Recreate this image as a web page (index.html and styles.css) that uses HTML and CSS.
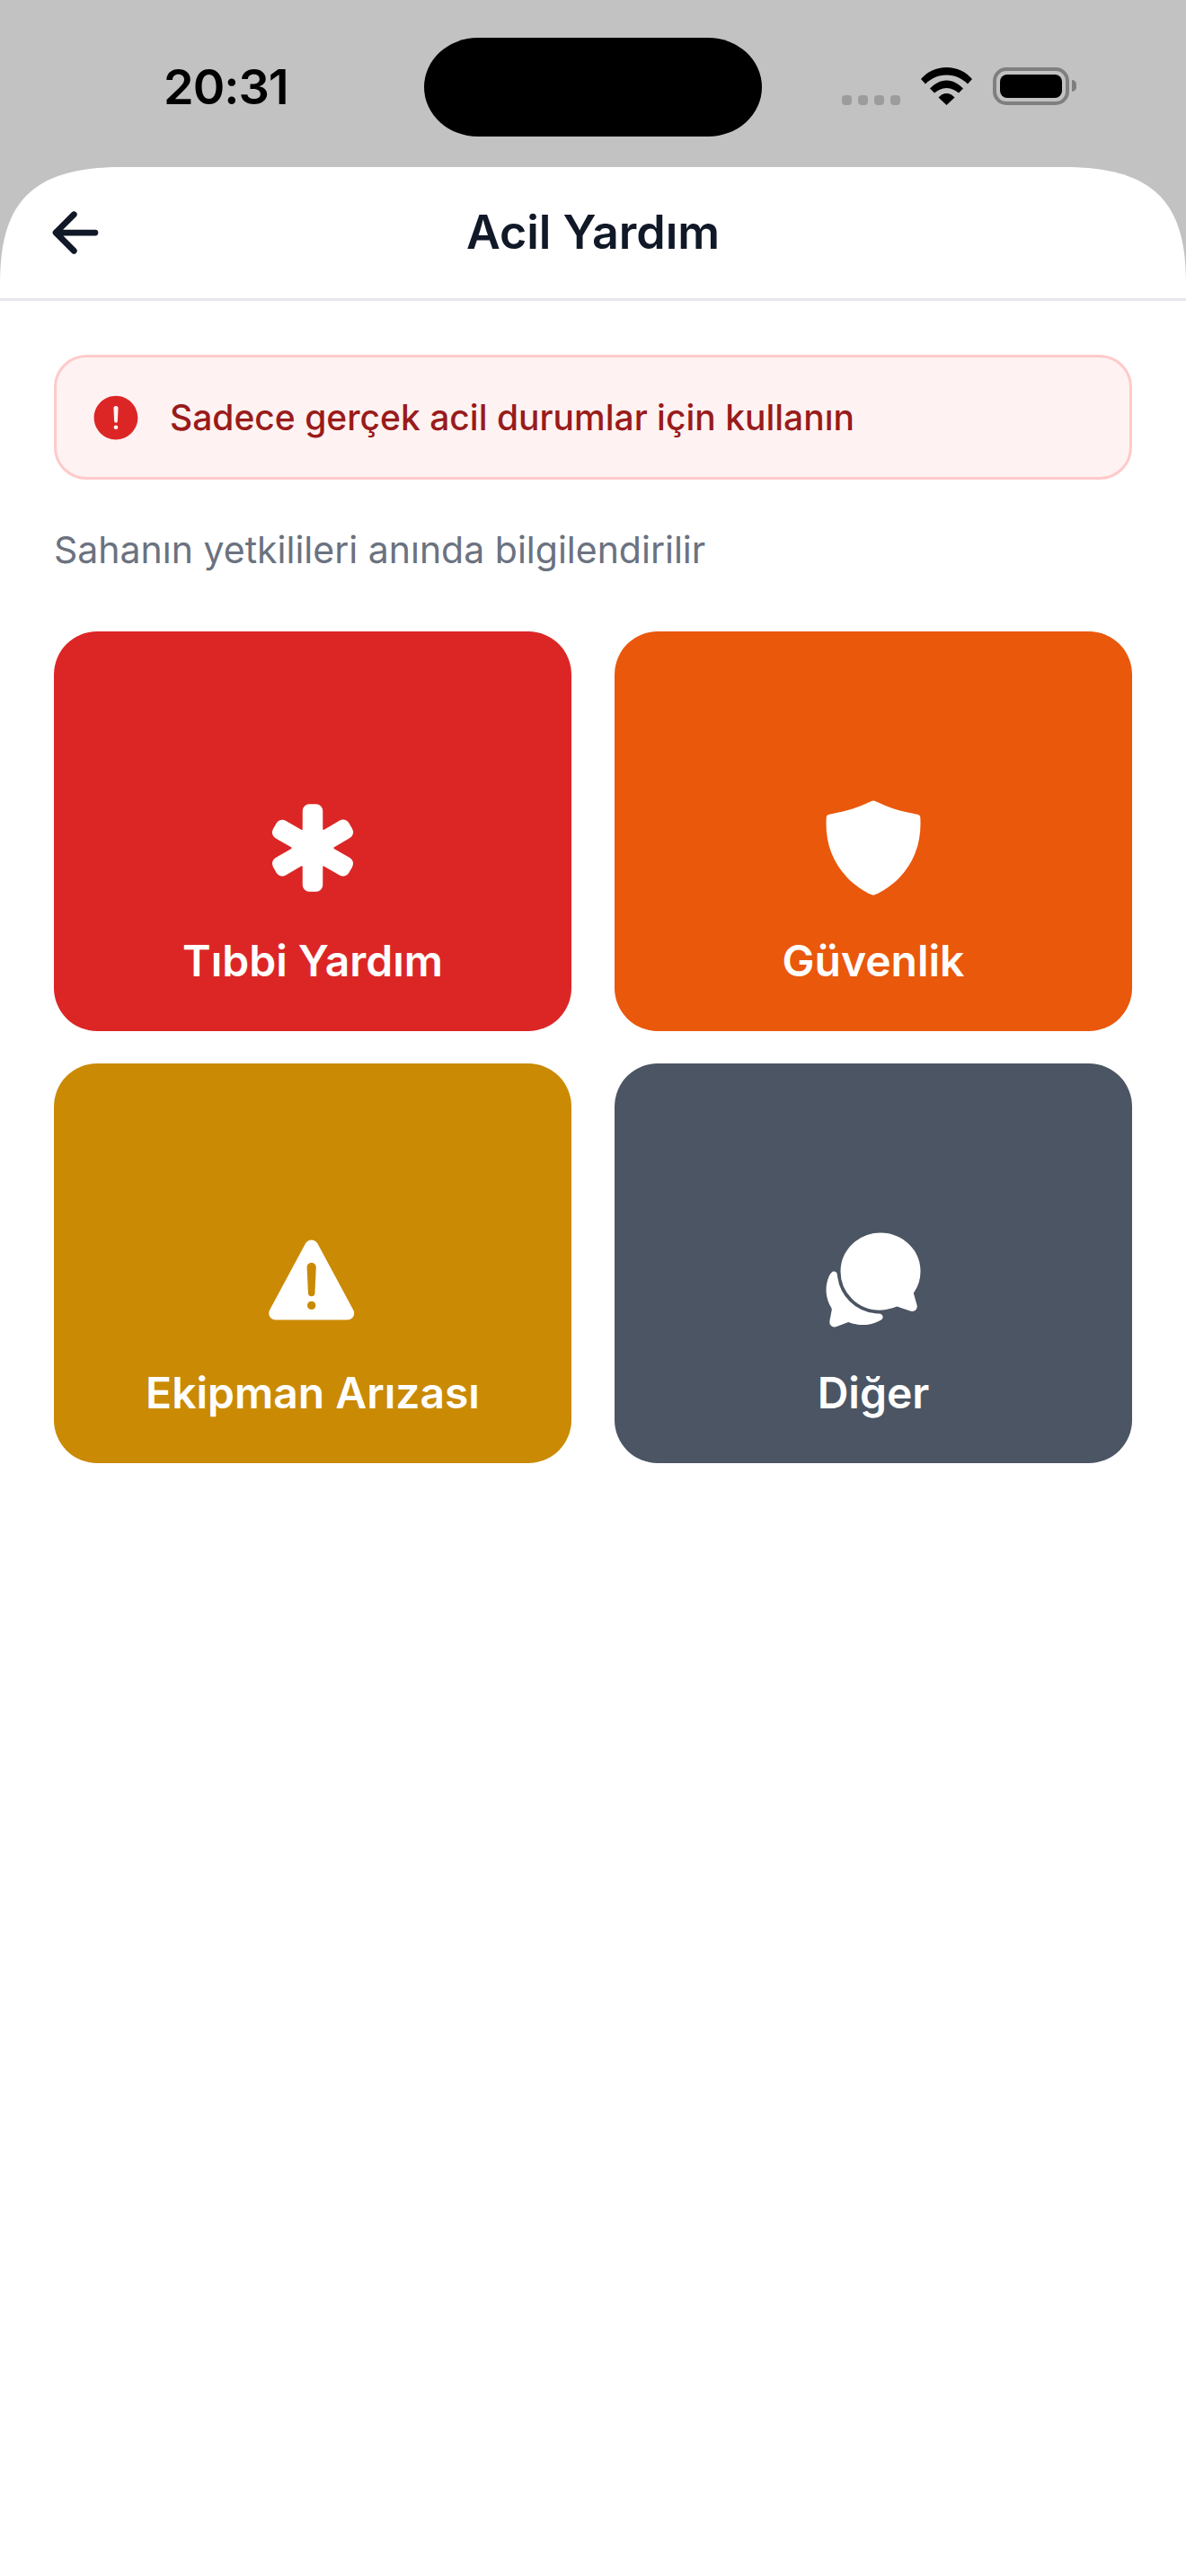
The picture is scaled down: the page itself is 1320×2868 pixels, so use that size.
FILE: index.html
```html
<!DOCTYPE html>
<html lang="tr">

<head>
    <meta charset="UTF-8">
    <meta name="viewport" content="width=device-width, initial-scale=1.0">
    <title>Acil Yardım</title>
    <link rel="stylesheet" href="styles.css">
</head>

<body>
    <div class="top">
        <!-- Status bar -->
        <div class="status-bar">
            <div class="status-time">20:31</div>
            <div class="status-island"></div>
            <div class="status-icons">
                <div class="status-dots">
                    <span class="status-dot"></span>
                    <span class="status-dot"></span>
                    <span class="status-dot"></span>
                    <span class="status-dot"></span>
                </div>
                <svg class="status-wifi" viewBox="0 0 57 42">
                    <path d="M0 13C7 5 17 0 28.5 0S50 5 57 13L52 18.5C46 12.5 38 8.5 28.5 8.5S11 12.5 5 18.5Z" />
                    <path d="M10 23.5C15 18.5 21 14.5 28.5 14.5S42 18.5 47 23.5L42 28.5C38.5 25.5 34 23 28.5 23S18.5 25.5 15 28.5Z" />
                    <path d="M19.5 33.5C22 31 25 29 28.5 29S35 31 37.5 33.5L28.5 42Z" />
                </svg>
                <div class="status-battery">
                    <div class="status-battery-level"></div>
                </div>
                <div class="status-battery-cap"></div>
            </div>
        </div>

        <!-- Header -->
        <header class="header">
            <svg class="header-back" viewBox="0 0 512 512">
                <path d="M244 400L100 256l144-144M120 256h292" />
            </svg>
            <h1 class="header-title">Acil Yardım</h1>
        </header>
    </div>

    <main class="content">
        <div class="alert">
            <svg class="alert-icon" viewBox="0 0 512 512">
                <path d="M256 48C141.31 48 48 141.31 48 256s93.31 208 208 208 208-93.31 208-208S370.69 48 256 48zm0 319.91a20 20 0 1120-20 20 20 0 01-20 20zm21.72-201.15l-5.74 122a16 16 0 01-32 0l-5.74-121.94v-.05a21.74 21.74 0 1143.44 0z" />
            </svg>
            <span class="alert-text">Sadece gerçek acil durumlar için kullanın</span>
        </div>

        <p class="subtitle">Sahanın yetkilileri anında bilgilendirilir</p>

        <div class="card-grid">
            <div class="card card-medical">
                <svg class="card-icon" viewBox="0 0 512 512">
                    <path d="M272 464h-32a32 32 0 01-32-32l.05-85.82a4 4 0 00-6-3.47l-74.34 43.06a31.94 31.94 0 01-43.7-11.67l-16-27.82a32 32 0 0111.7-43.73L154 260.14a4 4 0 000-6.92l-74.33-43.1a32 32 0 01-11.75-43.69l16-27.78a32 32 0 0143.69-11.73l74.34 43a4 4 0 006-3.46L208 80a32 32 0 0132-32h32a32 32 0 0132 32v85.93a4 4 0 006 3.47l74.32-43.06a32 32 0 0143.7 11.69l16 27.81a32 32 0 01-11.71 43.73L358 253.22a4 4 0 000 6.92l74.33 43.1a32 32 0 0111.75 43.69l-16 27.78a32 32 0 01-43.69 11.73l-74.34-43a4 4 0 00-6 3.46L304 432a32 32 0 01-32 32z" />
                </svg>
                <span class="card-label">Tıbbi Yardım</span>
            </div>
            <div class="card card-security">
                <svg class="card-icon" viewBox="0 0 512 512">
                    <path d="M479.07 111.36a16 16 0 00-13.15-14.74c-86.5-15.52-122.61-26.74-203.33-63.2a16 16 0 00-13.18 0C168.69 69.88 132.58 81.1 46.08 96.62a16 16 0 00-13.15 14.74c-3.85 61.11 4.36 118.05 24.43 169.24A349.47 349.47 0 00129 393.11c53.47 56.73 110.24 81.37 121.07 85.73a16 16 0 0012 0c10.83-4.36 67.6-29 121.07-85.73a349.47 349.47 0 0071.5-112.51c20.07-51.19 28.28-108.13 24.43-169.24z" />
                </svg>
                <span class="card-label">Güvenlik</span>
            </div>
            <div class="card card-equipment">
                <svg class="card-icon" viewBox="0 0 512 512">
                    <path d="M449.07 399.08L278.64 82.58c-12.08-22.44-44.26-22.44-56.35 0L51.87 399.08A32 32 0 0080 446.25h340.89a32 32 0 0028.18-47.17zm-198.6-1.83a20 20 0 1120-20 20 20 0 01-20 20zm21.72-201.15l-5.74 122a16 16 0 01-32 0l-5.74-121.95a21.73 21.73 0 0121.5-22.69h.21a21.74 21.74 0 0121.73 22.7z" />
                </svg>
                <span class="card-label">Ekipman Arızası</span>
            </div>
            <div class="card card-other">
                <svg class="card-icon" viewBox="0 0 512 512">
                    <path d="M60.44 389.17c0 .07 0 .2-.08.38.03-.12.05-.25.08-.38zM439.9 405.6a26.77 26.77 0 01-9.59-2l-56.78-20.13-.42-.17a9.88 9.88 0 00-3.91-.76 10.32 10.32 0 00-3.62.66c-1.38.52-13.81 5.19-26.85 8.77-7.07 1.94-31.68 8.27-51.43 8.27-50.48 0-97.68-19.4-132.89-54.63A183.38 183.38 0 01100.3 215.1a175.9 175.9 0 014.06-37.58c8.79-40.62 32.07-77.57 65.55-104A194.76 194.76 0 01290.3 32c52.21 0 100.86 20 137 56.18 34.16 34.27 52.88 79.33 52.73 126.87a177.86 177.86 0 01-30.3 99.15l-.19.28-.74 1c-.17.23-.34.45-.5.68l-.15.27a21.63 21.63 0 00-1.08 2.09l15.74 55.94a26.42 26.42 0 011.12 7.11 24 24 0 01-24.03 24.03z" />
                    <path d="M299.87 425.39a15.74 15.74 0 00-10.29-8.1c-5.78-1.53-12.52-1.27-17.67-1.65a201.78 201.78 0 01-128.82-58.75A199.21 199.21 0 0186.4 244.16C85 234.42 85 232 85 232a16 16 0 00-28-10.58s-7.88 8.58-11.6 17.19a162.09 162.09 0 0011 150.06C59 393 59 395 58.42 399.5c-2.73 14.11-7.51 39-10 51.91a24 24 0 008 22.92l.46.39A24.34 24.34 0 0072 480a23.42 23.42 0 009-1.79l53.51-20.65a8.05 8.05 0 015.72 0c21.07 7.84 43 12 63.78 12a176 176 0 0074.91-16.66c5.46-2.56 14-5.34 19-11.12a15 15 0 001.95-16.39z" />
                </svg>
                <span class="card-label">Diğer</span>
            </div>
        </div>
    </main>
</body>

</html>
```

FILE: styles.css
```css
html,
body {
    margin: 0;
    height: 2868px;
    background-color: #fff;
    font-family: Inter, "Noto Sans", sans-serif;
}

.top {
    background-color: #c2c2c2;
}

/* Status bar */
.status-bar {
    display: grid;
    grid-template-columns: 472px 376px 1fr;
    align-items: center;
    box-sizing: border-box;
    height: 186px;
    padding: 42px 0 34px;
}

.status-time {
    padding-left: 182px;
    font-size: 54px;
    font-weight: 600;
    letter-spacing: -1px;
    line-height: 110px;
    color: #000;
}

.status-island {
    height: 110px;
    border-radius: 60px / 55px;
    background-color: #000;
}

.status-icons {
    display: flex;
    align-items: flex-end;
    height: 42px;
    margin-top: -2px;
    padding-left: 89px;
}

.status-dots {
    display: flex;
    gap: 7px;
}

.status-dot {
    width: 11px;
    height: 11px;
    border-radius: 4px;
    background-color: #9c9c9c;
}

.status-wifi {
    width: 57px;
    height: 42px;
    margin-left: 23px;
    fill: #000;
}

.status-battery {
    box-sizing: border-box;
    width: 85px;
    height: 42px;
    margin-left: 23px;
    padding: 4px;
    border: 4px solid #7f7f7f;
    border-radius: 15px;
}

.status-battery-level {
    height: 100%;
    border-radius: 8px;
    background-color: #000;
}

.status-battery-cap {
    width: 5px;
    height: 13px;
    margin: 0 0 15px 3px;
    border-radius: 0 5px 5px 0;
    background-color: #7f7f7f;
}

/* Header */
.header {
    display: grid;
    grid-template-columns: 72px 1fr 72px;
    align-items: center;
    box-sizing: border-box;
    height: 149px;
    padding: 0 48px;
    border-bottom: 3px solid #e5e7eb;
    background-color: #fff;
    clip-path: path("M0 149V130C0 45 30 0 135 0H1185C1290 0 1320 45 1320 130V149Z");
}

.header-back {
    width: 72px;
    height: 72px;
    fill: none;
    stroke: #111827;
    stroke-width: 48;
    stroke-linecap: round;
    stroke-linejoin: round;
}

.header-title {
    margin: 0;
    font-size: 52px;
    font-weight: 600;
    line-height: 72px;
    text-align: center;
    color: #111827;
}

/* Content */
.content {
    padding: 60px 60px 0;
}

.alert {
    display: flex;
    align-items: center;
    gap: 30px;
    box-sizing: border-box;
    height: 139px;
    padding: 0 36px;
    border: 3px solid #fecaca;
    border-radius: 36px;
    background-color: #fef2f2;
}

.alert-icon {
    flex-shrink: 0;
    width: 60px;
    height: 60px;
    fill: #dc2626;
}

.alert-text {
    font-size: 39px;
    font-weight: 500;
    color: #991b1b;
}

.subtitle {
    margin: 47px 0 59px;
    font-size: 41px;
    line-height: 63px;
    color: #6b7280;
}

.card-grid {
    display: grid;
    grid-template-columns: 1fr 1fr;
    gap: 36px 48px;
}

.card {
    display: flex;
    flex-direction: column;
    align-items: center;
    justify-content: flex-end;
    gap: 30px;
    box-sizing: border-box;
    height: 445px;
    padding-bottom: 42px;
    border-radius: 48px;
}

.card-medical {
    background-color: #dc2626;
}

.card-security {
    background-color: #ea580c;
}

.card-equipment {
    background-color: #ca8a04;
}

.card-other {
    background-color: #4b5563;
}

.card-icon {
    width: 120px;
    height: 120px;
    fill: #fff;
}

.card-label {
    font-size: 48px;
    font-weight: 600;
    line-height: 72px;
    color: #fff;
}
```
